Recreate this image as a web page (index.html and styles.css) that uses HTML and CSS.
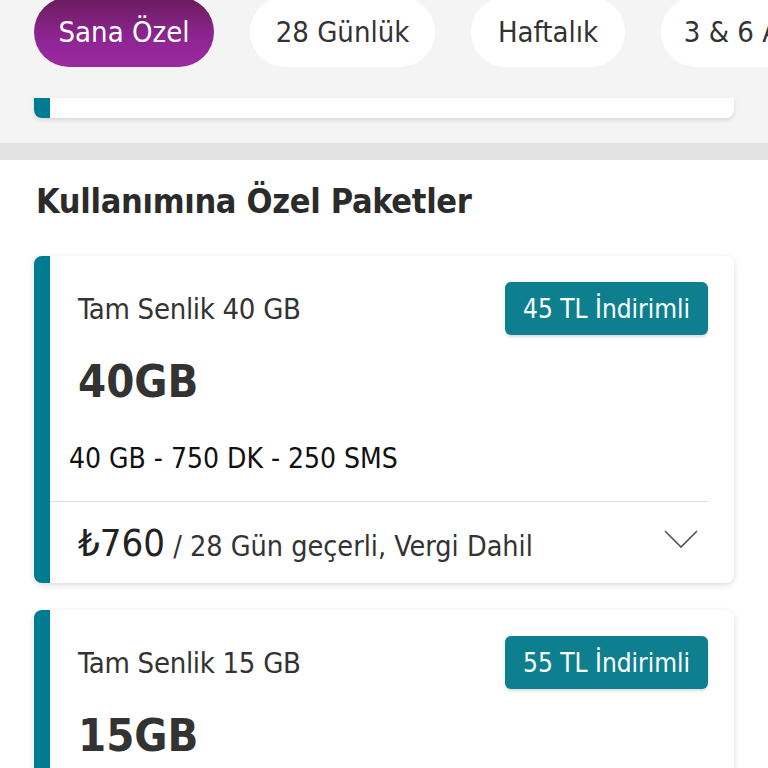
FILE: index.html
```html
<!DOCTYPE html>
<html lang="tr">
<head>
<meta charset="utf-8">
<link rel="stylesheet" href="styles.css">
</head>
<body>
<div class="top">
  <div class="tabs">
    <div class="tab tab-active w1">Sana Özel</div>
    <div class="tab w2">28 Günlük</div>
    <div class="tab w3">Haftalık</div>
    <div class="tab w4">3 &amp; 6 Aylık</div>
  </div>
  <div class="peek"></div>
</div>
<div class="band"></div>
<main class="content">
  <h1 class="title">Kullanımına Özel Paketler</h1>
  <div class="card">
    <div class="card-head">
      <div class="name">Tam Senlik 40 GB</div>
      <div class="badge">45 TL İndirimli</div>
    </div>
    <div class="amount">40GB</div>
    <div class="desc">40 GB - 750 DK - 250 SMS</div>
    <div class="card-foot">
      <div class="price"><span class="cur">₺760</span><span class="per"> / 28 Gün geçerli, Vergi Dahil</span></div>
      <svg class="chev" width="34" height="20" viewBox="0 0 34 20"><path d="M1 2 L17 18 L33 2" fill="none" stroke="#555" stroke-width="1.6"/></svg>
    </div>
  </div>
  <div class="card">
    <div class="card-head">
      <div class="name">Tam Senlik 15 GB</div>
      <div class="badge">55 TL İndirimli</div>
    </div>
    <div class="amount">15GB</div>
    <div class="desc">15 GB - 750 DK - 250 SMS</div>
  </div>
</main>
</body>
</html>
```
FILE: styles.css
```css
html, body { margin: 0; padding: 0; }
body {
  width: 768px;
  height: 768px;
  overflow: hidden;
  background: #fff;
  font-family: "Liberation Sans Narrow", "DejaVu Sans Condensed", "Roboto", sans-serif;
  color: #333;
}
.top {
  background: #f4f4f4;
  height: 143px;
  overflow: hidden;
}
.tabs {
  display: flex;
  gap: 36px;
  padding-left: 34px;
  margin-top: -3px;
  white-space: nowrap;
}
.tab {
  flex: none;
  height: 70px;
  border-radius: 35px;
  background: #fff;
  display: flex;
  align-items: center;
  justify-content: center;
  font-size: 29px;
  color: #333;
}
.tab-active {
  background: linear-gradient(180deg, #6a1c5c 0%, #8e2594 60%, #9c2aa0 100%);
  color: #fff;
}
.w1 { width: 180px; }
.w2 { width: 185px; }
.w3 { width: 154px; }
.w4 { width: 185px; }
.peek {
  margin: 31px 0 0 34px;
  width: 700px;
  height: 20px;
  background: #fff;
  border-left: 16px solid #007c92;
  box-sizing: border-box;
  border-radius: 0 0 8px 8px;
  box-shadow: 0 2px 4px rgba(0,0,0,0.12);
}
.band {
  height: 17px;
  background: #e3e3e3;
}
.content {
  padding: 0 34px;
}
.title {
  margin: 21px 0 0 2px;
  font-size: 34px;
  line-height: 40px;
  font-weight: bold;
  color: #2b2b2b;
  letter-spacing: -0.3px;
}
.card {
  margin-top: 35px;
  width: 700px;
  box-sizing: border-box;
  background: #fff;
  border-left: 16px solid #007c92;
  border-radius: 8px;
  box-shadow: 0 2px 6px rgba(0,0,0,0.14);
  padding: 26px 26px 0 0;
}
.card + .card { margin-top: 27px; }
.card-head {
  display: flex;
  justify-content: space-between;
  align-items: center;
  padding-left: 28px;
}
.name {
  font-size: 29px;
  color: #333;
  letter-spacing: -0.3px;
}
.badge {
  background: #0e7f8f;
  color: #fff;
  font-size: 26px;
  height: 53px;
  padding: 0 18px;
  display: flex;
  align-items: center;
  border-radius: 6px;
  box-shadow: 0 2px 3px rgba(0,0,0,0.15);
}
.amount {
  padding-left: 28px;
  margin-top: 20px;
  font-size: 45px;
  line-height: 54px;
  font-weight: bold;
  color: #333;
}
.desc {
  padding-left: 19px;
  margin-top: 33px;
  font-size: 28px;
  line-height: 34px;
  color: #111;
  padding-bottom: 25px;
  border-bottom: 1.5px solid #dedede;
}
.card-foot {
  display: flex;
  justify-content: space-between;
  align-items: center;
  padding: 19px 10px 18px 28px;
}
.price { color: #222; }
.cur { font-size: 38px; }
.per { font-size: 28.5px; color: #333; }
.chev { margin-top: -8px; }
```
